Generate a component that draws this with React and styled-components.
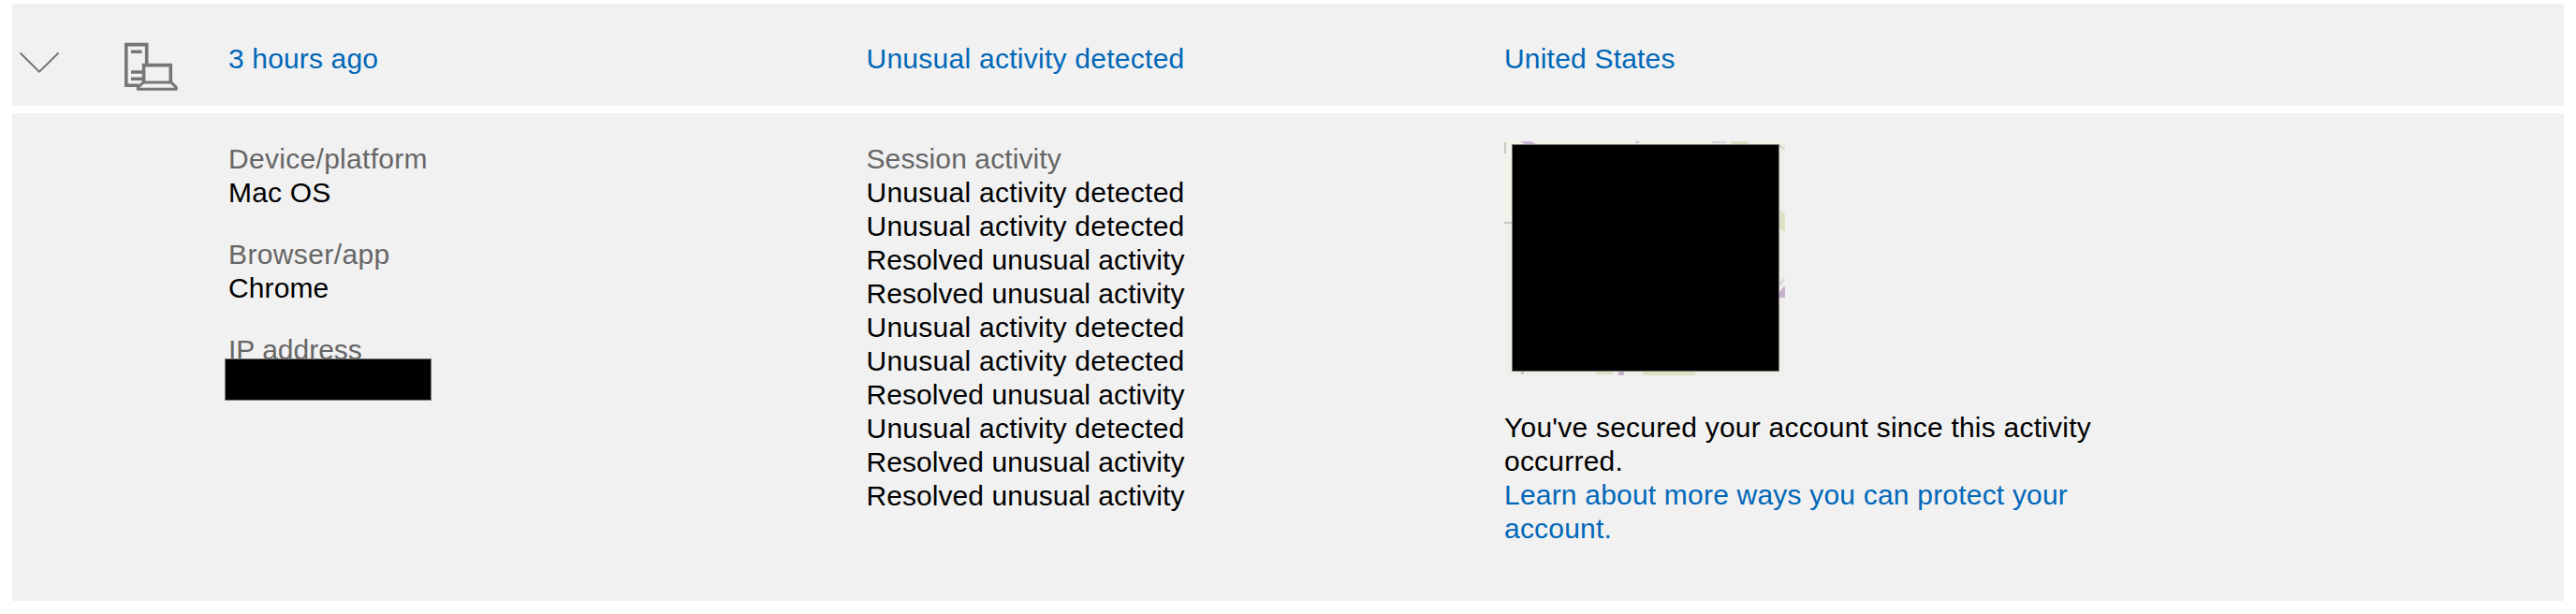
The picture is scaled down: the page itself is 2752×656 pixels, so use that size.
import React from "react"
import styled, {createGlobalStyle} from "styled-components"

const DETECTED = "Unusual activity detected"
const RESOLVED = "Resolved unusual activity"

const sessionActivity = [
  DETECTED,
  DETECTED,
  RESOLVED,
  RESOLVED,
  DETECTED,
  DETECTED,
  RESOLVED,
  DETECTED,
  RESOLVED,
  RESOLVED
]

export default function App () {
  return (
    <Page>
      <GlobalStyle />
      <SummaryRow>
        <IconCell>
          <ChevronIcon />
          <DeviceIcon />
        </IconCell>
        <SummaryLink $spacing = "0.15px">3 hours ago</SummaryLink>
        <SummaryLink $spacing = "0.26px">{DETECTED}</SummaryLink>
        <SummaryLink>United States</SummaryLink>
      </SummaryRow>

      <DetailsRow>
        <div />
        <FieldList>
          <Field>
            <Label $spacing = "0.3px">Device/platform</Label>
            <Text>Mac OS</Text>
          </Field>
          <Field>
            <Label $spacing = "0.38px">Browser/app</Label>
            <Text $spacing = "0.1px">Chrome</Text>
          </Field>
          <Field>
            <Label $spacing = "0px">IP address</Label>
            <Redaction />
          </Field>
        </FieldList>
        <Field>
          <Label $spacing = "0.1px">Session activity</Label>
          {sessionActivity.map((activity, index) => (
            <Text key = {index} $spacing = {activity === DETECTED ? "0.26px" : "0.06px"}>{activity}</Text>
          ))}
        </Field>
        <LocationColumn>
          <LocationMap />
          <Text $spacing = "0.22px">You've secured your account since this activity<br />occurred.</Text>
          <TextLink>Learn about more ways you can protect your<br />account.</TextLink>
        </LocationColumn>
      </DetailsRow>
    </Page>
  )
}

function ChevronIcon () {
  return (
    <svg width = "44" height = "24" viewBox = "0 0 44 24" fill = "none" stroke = "#757575" strokeWidth = "2">
      <path d = "M1.5 1.5L22 21.7L42.5 1.5" />
    </svg>
  )
}

function DeviceIcon () {
  return (
    <svg width = "58" height = "53" viewBox = "0 0 58 53" fill = "none" stroke = "#767676" strokeWidth = "3.6">
      <path d = "M23.7 24V2.6H1.8V46.3H15" />
      <path d = "M7 10.3H18.5M7 32H19M7 39.3H19" />
      <path d = "M20.6 43V24.6H49.3V43" />
      <path d = "M20.2 43H49.8L55.3 48.4V50.2H14.3V48.4Z" strokeWidth = "3" strokeLinejoin = "round" />
    </svg>
  )
}

function LocationMap () {
  return (
    <MapFrame>
      <svg width = "300" height = "250" viewBox = "0 0 300 250">
        <rect width = "300" height = "250" fill = "#efeee9" />
        <path d = "M0 0H300V3H0ZM0 0H8V90H0Z" fill = "#f2f2eb" />
        <path d = "M17 0H29L34 3H22Z" fill = "#c9b7cf" />
        <path d = "M222 0H237V2H222Z" fill = "#d9d4df" />
        <path d = "M240 0H261V3H244ZM294 73L300 78V96L294 94ZM98 246H116V249H98ZM148 246H204V250H148Z" fill = "#d9e2c3" />
        <path d = "M0 1H2V13H0ZM0 86H8V88H0ZM18 246H21V249H18ZM140 0H144V2H140Z" fill = "#c7c7c3" />
        <path d = "M294 3L300 8V10L294 6Z" fill = "#d0d5c7" />
        <path d = "M294 161L299 155L300 156V167H294ZM122 246H128V250H122Z" fill = "#c5b1cb" />
        <path d = "M294 151L299 146V149L295 154Z" fill = "#d9d5df" />
      </svg>
      <MapCover />
    </MapFrame>
  )
}


const GlobalStyle = createGlobalStyle`
  body {
    margin: 0;
    background-color: #ffffff;
  }
`

const Page = styled.main`
  display: flex;
  flex-direction: column;
  gap: 8px;
  box-sizing: border-box;
  width: 2752px;
  height: 656px;
  padding: 4px 13px 14px;
  font-family: "Liberation Sans", Arial, sans-serif;
  font-size: 30px;
  line-height: 36px;
`

const Row = styled.section`
  display: grid;
  grid-template-columns: 231px 681.5px 681.5px 1fr;
  align-items: start;
  box-sizing: border-box;
  background-color: #f1f1f1;
`

const SummaryRow = styled(Row)`
  height: 109px;
  padding-top: 41px;
`

const DetailsRow = styled(Row)`
  height: 521px;
  padding-top: 31px;
`

const IconCell = styled.div`
  display: flex;
  align-items: flex-start;
  gap: 69px;
  padding-left: 7px;

  svg:first-child {
    margin-top: 10px;
  }
`

const Text = styled.div`
  color: #000000;
  letter-spacing: ${props => props.$spacing || "0.2px"};
  white-space: nowrap;
`

const Label = styled(Text)`
  color: #666666;
`

const TextLink = styled(Text)`
  color: #0067b8;
`

const SummaryLink = styled(TextLink)`
  cursor: pointer;
`

const FieldList = styled.div`
  display: flex;
  flex-direction: column;
  gap: 30px;
`

const Field = styled.div`
  position: relative;
`

/* covers the address and the foot of its label */
const Redaction = styled.div`
  position: absolute;
  top: 27px;
  left: -4px;
  box-sizing: border-box;
  width: 221px;
  height: 45px;
  border: 1px solid #777777;
  background-color: #000000;
`

const LocationColumn = styled.div`
  display: flex;
  flex-direction: column;
`

const MapFrame = styled.div`
  position: relative;
  width: 300px;
  height: 250px;
  margin: -1px 0 38px;

  svg {
    display: block;
  }
`

const MapCover = styled.div`
  position: absolute;
  top: 3px;
  left: 8px;
  box-sizing: border-box;
  width: 286px;
  height: 243px;
  border: 1px solid #777777;
  background-color: #000000;
`
